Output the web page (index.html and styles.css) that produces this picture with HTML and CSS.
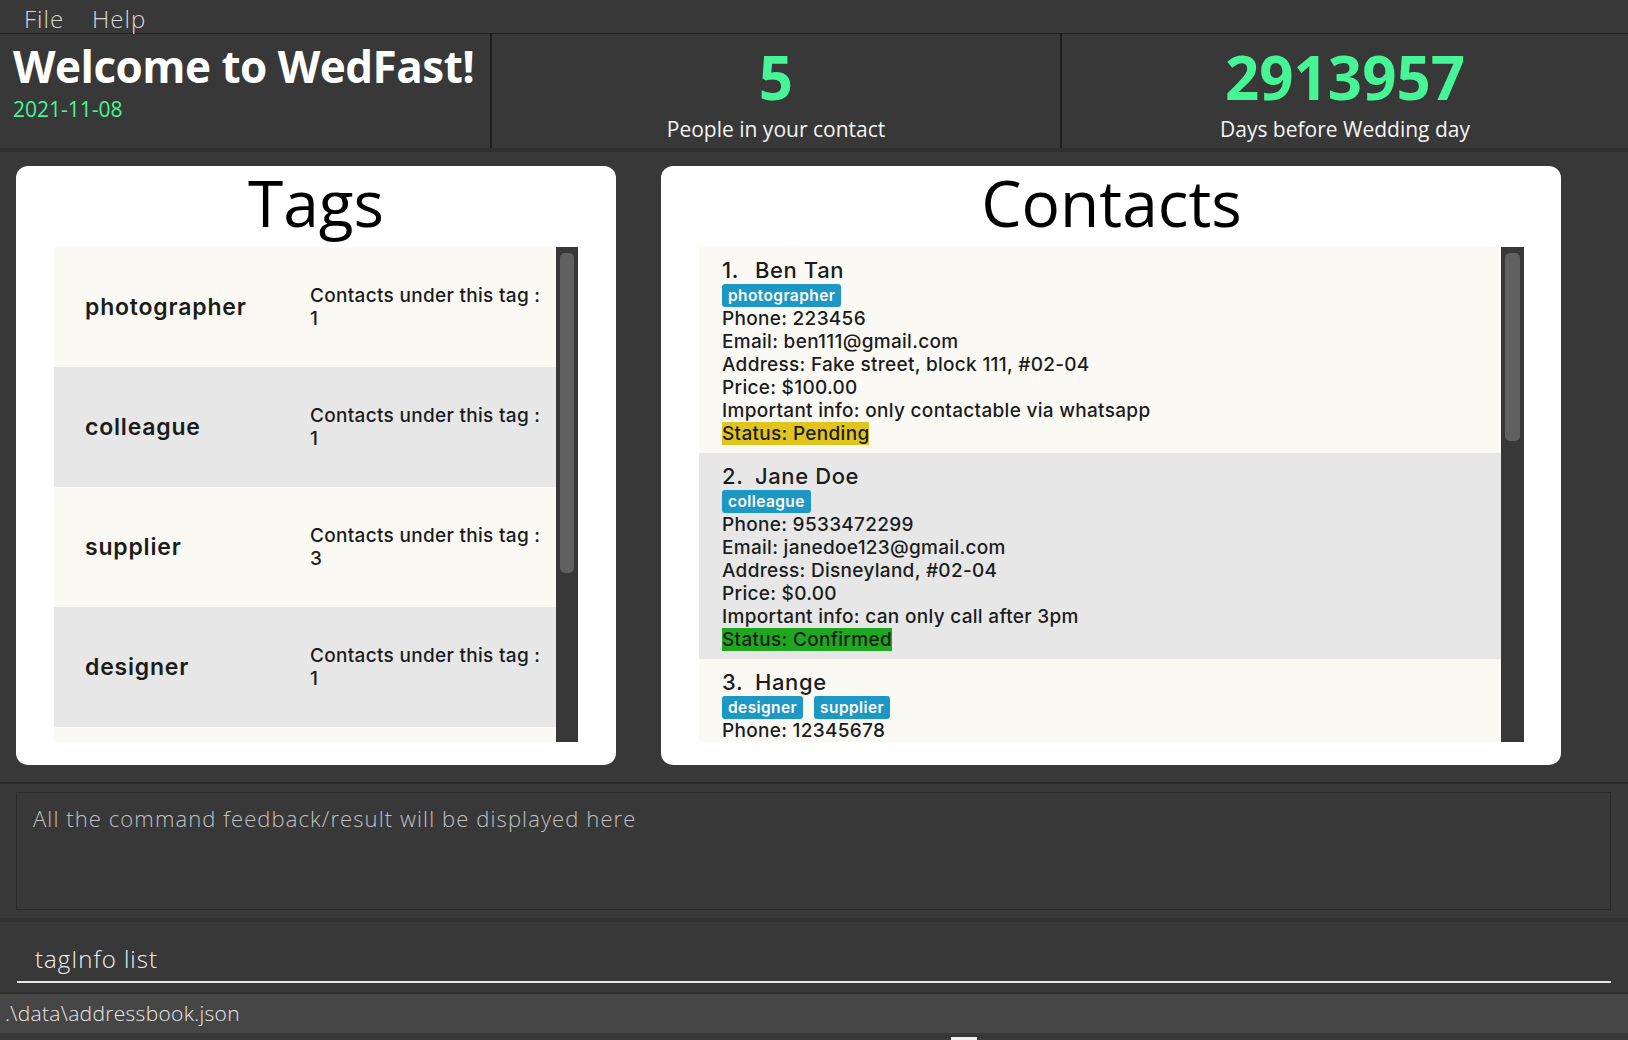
FILE: index.html
```html
<!DOCTYPE html>
<html lang="en">
<head>
    <meta charset="UTF-8">
    <meta name="viewport" content="width=device-width, initial-scale=1.0">
    <title>WedFast</title>
    <link rel="stylesheet" href="styles.css">
</head>
<body>

<div class="menubar">
    <span>File</span>
    <span>Help</span>
</div>

<!-- Cabecera con resumen -->
<div class="summary">
    <div class="welcome">
        <h1>Welcome to WedFast!</h1>
        <div class="date">2021-11-08</div>
    </div>
    <div class="stat">
        <div class="stat-num">5</div>
        <div class="stat-label">People in your contact</div>
    </div>
    <div class="stat">
        <div class="stat-num">2913957</div>
        <div class="stat-label">Days before Wedding day</div>
    </div>
</div>

<div class="lists">
    <!-- Tags -->
    <div class="card card-tags">
        <h2>Tags</h2>
        <div class="list">
            <div class="list-body">
                <div class="tag-row">
                    <div class="tag-name">photographer</div>
                    <div class="tag-count">Contacts under this tag :<br>1</div>
                </div>
                <div class="tag-row">
                    <div class="tag-name">colleague</div>
                    <div class="tag-count">Contacts under this tag :<br>1</div>
                </div>
                <div class="tag-row">
                    <div class="tag-name">supplier</div>
                    <div class="tag-count">Contacts under this tag :<br>3</div>
                </div>
                <div class="tag-row">
                    <div class="tag-name">designer</div>
                    <div class="tag-count">Contacts under this tag :<br>1</div>
                </div>
                <div class="tag-row"></div>
            </div>
            <div class="scrollbar"><div class="thumb thumb-tags"></div></div>
        </div>
    </div>

    <!-- Contacts -->
    <div class="card card-contacts">
        <h2>Contacts</h2>
        <div class="list">
            <div class="list-body">
                <div class="contact">
                    <div class="contact-name"><span class="idx">1.</span>Ben Tan</div>
                    <div class="badges"><span class="badge">photographer</span></div>
                    <div>Phone: 223456</div>
                    <div>Email: ben111@gmail.com</div>
                    <div>Address: Fake street, block 111, #02-04</div>
                    <div>Price: $100.00</div>
                    <div>Important info: only contactable via whatsapp</div>
                    <div><span class="status pending">Status: Pending</span></div>
                </div>
                <div class="contact">
                    <div class="contact-name"><span class="idx">2.</span>Jane Doe</div>
                    <div class="badges"><span class="badge">colleague</span></div>
                    <div>Phone: 9533472299</div>
                    <div>Email: janedoe123@gmail.com</div>
                    <div>Address: Disneyland, #02-04</div>
                    <div>Price: $0.00</div>
                    <div>Important info: can only call after 3pm</div>
                    <div><span class="status confirmed">Status: Confirmed</span></div>
                </div>
                <div class="contact">
                    <div class="contact-name"><span class="idx">3.</span>Hange</div>
                    <div class="badges"><span class="badge">designer</span><span class="badge">supplier</span></div>
                    <div>Phone: 12345678</div>
                </div>
            </div>
            <div class="scrollbar"><div class="thumb thumb-contacts"></div></div>
        </div>
    </div>
</div>

<!-- Resultado -->
<div class="result">
    <div class="result-box">All the command feedback/result will be displayed here</div>
</div>

<div class="command">
    <div class="command-input">tagInfo list</div>
</div>

<div class="statusbar">.\data\addressbook.json</div>
<div class="bottom-strip"><div class="grip"></div></div>

</body>
</html>
```

FILE: styles.css
```css
* {
    box-sizing: border-box;
}

body {
    margin: 0;
    width: 1628px;
    height: 1040px;
    overflow: hidden;
    background-color: #383838;
    color: #fff;
    font-family: "Open Sans", sans-serif;
}

/* Menu */
.menubar {
    height: 34px;
    display: flex;
    gap: 28px;
    padding-left: 24px;
    border-bottom: 1px solid #1e1e1e;
    font-size: 24px;
    font-weight: 300;
    letter-spacing: 1px;
    line-height: 38px;
    color: #d8d8d8;
}

/* Cabecera */
.summary {
    display: grid;
    grid-template-columns: 492px 1fr 1fr;
    height: 118px;
    border-bottom: 4px solid #303030;
}

.welcome {
    padding: 9px 13px 0;
    border-right: 2px solid #1c1c1c;
}

.welcome h1 {
    margin: 0;
    font-size: 44px;
    line-height: 46px;
    font-weight: 700;
    letter-spacing: -0.5px;
    white-space: nowrap;
    color: #fff;
}

.date {
    margin-top: 10px;
    font-size: 21px;
    line-height: 21px;
    color: #45f596;
}

.stat {
    text-align: center;
    padding-top: 13px;
}

.stat + .stat {
    border-left: 2px solid #1c1c1c;
}

.stat-num {
    font-size: 60px;
    line-height: 60px;
    font-weight: 700;
    color: #45f596;
}

.stat-label {
    margin-top: 12px;
    font-size: 21px;
    line-height: 21px;
    color: #f4f4f4;
}

/* Paneles */
.lists {
    height: 632px;
    display: flex;
    gap: 45px;
    padding: 14px 0 0 16px;
    border-bottom: 2px solid #2b2b2b;
}

.card {
    height: 599px;
    background: #fff;
    border-radius: 12px;
    padding: 0 38px 23px;
    display: flex;
    flex-direction: column;
}

.card-tags {
    width: 600px;
}

.card-contacts {
    width: 900px;
    padding-right: 37px;
}

.card h2 {
    margin: 0;
    height: 81px;
    padding-top: 5px;
    text-align: center;
    font-size: 64px;
    line-height: 64px;
    font-weight: 400;
    color: #000;
}

.list {
    flex: 1;
    display: flex;
    min-height: 0;
}

.list-body {
    flex: 1;
    overflow: hidden;
    font-family: Inter, "Open Sans", sans-serif;
    color: #1c1c1c;
}

.scrollbar {
    width: 22px;
    background: #383838;
    padding: 6px 4px;
}

.card-contacts .scrollbar {
    width: 23px;
}

.thumb {
    background: #606060;
    border-radius: 5px;
}

.thumb-tags {
    height: 320px;
}

.thumb-contacts {
    height: 188px;
}

/* Filas de tags */
.tag-row {
    height: 120px;
    display: grid;
    grid-template-columns: 225px 1fr;
    align-items: center;
    padding-left: 31px;
    background: #faf9f4;
}

.tag-row:nth-child(even) {
    background: #e7e7e7;
}

.tag-name {
    font-size: 23px;
    font-weight: 600;
    letter-spacing: 0.8px;
}

.tag-count {
    font-size: 19px;
    line-height: 23px;
    font-weight: 500;
    letter-spacing: 0.3px;
}

/* Filas de contactos */
.contact {
    height: 206px;
    padding: 10px 0 8px 23px;
    background: #faf9f4;
    font-size: 19px;
    line-height: 23px;
    font-weight: 500;
    letter-spacing: 0.3px;
}

.contact:nth-child(even) {
    background: #e7e7e7;
}

.contact-name {
    font-size: 22px;
    line-height: 27px;
    letter-spacing: 0.6px;
}

.idx {
    display: inline-block;
    width: 33px;
}

.badges {
    display: flex;
    gap: 11px;
    height: 23px;
}

.badge {
    background: #1d98c4;
    color: #fff;
    font-size: 15.5px;
    font-weight: 600;
    letter-spacing: 0.4px;
    line-height: 23px;
    padding: 0 6px;
    border-radius: 3px;
}

.status {
    display: inline-block;
}

.status.pending {
    background: #e2c41f;
}

.status.confirmed {
    background: #1fa81f;
}

/* Resultado */
.result {
    height: 138px;
    padding: 8px 17px 0 16px;
    border-bottom: 4px solid #2e2e2e;
}

.result-box {
    height: 118px;
    border: 1px solid #2a2a2a;
    padding: 10px 16px;
    font-size: 22px;
    font-weight: 300;
    letter-spacing: 1.1px;
    color: #c0c0c0;
}

.command {
    height: 72px;
    padding: 20px 17px 0 17px;
    border-bottom: 2px solid #2e2e2e;
}

.command-input {
    height: 41px;
    padding-left: 18px;
    border-bottom: 2px solid #e8e8e8;
    font-size: 24px;
    font-weight: 300;
    letter-spacing: 1px;
    color: #f0f0f0;
}

.statusbar {
    height: 39px;
    background: #464646;
    padding-left: 5px;
    font-size: 21px;
    line-height: 39px;
    font-weight: 300;
    letter-spacing: 0.3px;
    color: #e6e6e6;
}

.bottom-strip {
    height: 7px;
    background: #383838;
    position: relative;
}

.grip {
    position: absolute;
    left: 951px;
    bottom: 0;
    width: 26px;
    height: 3px;
    background: #f0f0f0;
}
```
